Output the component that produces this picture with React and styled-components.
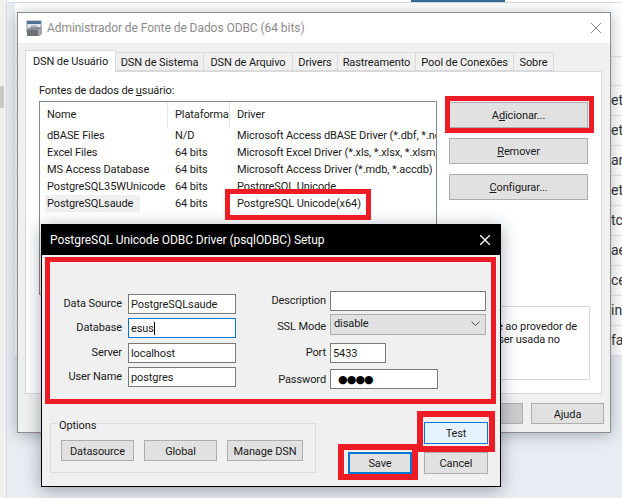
import React from "react";
import styled, { createGlobalStyle } from "styled-components";

const GlobalStyle = createGlobalStyle`
  html, body {
    margin: 0;
    padding: 0;
    background: #e9edf3;
  }
  * {
    box-sizing: border-box;
  }
`;

const Desktop = styled.div`
  position: relative;
  width: 622px;
  height: 498px;
  overflow: hidden;
  display: flex;
  background: #e9edf3;
  font-family: Roboto, "Liberation Sans", sans-serif;
  font-size: 11px;
  letter-spacing: -0.1px;
  color: #1a1a1a;
`;

const Sidebar = styled.div`
  width: 7px;
  height: 100%;
  flex: none;
  padding-top: 86px;
  background: #f1f1f1;
  border-right: 1px solid #d9dde6;
`;

const SidebarThumb = styled.div`
  width: 4px;
  height: 22px;
  background: #c9c9c9;
`;

const Main = styled.div`
  flex: 1;
  min-width: 0;
`;

const TopStrip = styled.div`
  height: 3px;
  padding-left: 404px;
  background: #fff;
  border-bottom: 1px solid #d9dde6;
`;

const ActiveTab = styled.div`
  width: 94px;
  height: 2px;
  background: #336b96;
`;

const Table = styled.div`
  margin-left: 8px;
  background: #fff;
`;

const TableHead = styled.div`
  height: ${(p) => p.$height}px;
  border-bottom: 1px solid #e3e3e3;
`;

const TableRow = styled.div`
  height: 30px;
  padding-left: 596px;
  line-height: 29px;
  font-size: 14px;
  letter-spacing: 0;
  white-space: nowrap;
  overflow: hidden;
  color: #333;
  border-bottom: 1px solid #e3e3e3;
`;

const AdminWindow = styled.div`
  position: absolute;
  left: 17px;
  top: 12px;
  width: 594px;
  height: 421px;
  display: flex;
  flex-direction: column;
  background: #f0f0f0;
  border: 1px solid #8e8e8e;
  box-shadow: 0 2px 14px rgba(40, 50, 70, 0.35);
`;

const AdminTitle = styled.div`
  height: 30px;
  flex: none;
  display: flex;
  align-items: center;
  justify-content: space-between;
  padding: 0 9px 0 8px;
  background: #fff;
  color: #8c8c8c;
  font-size: 12px;
  letter-spacing: -0.06px;
`;

const TitleLeft = styled.div`
  display: flex;
  align-items: center;
  gap: 4px;
`;

const TabStrip = styled.div`
  display: flex;
  align-items: flex-end;
  height: 28px;
  padding-left: 7px;
  flex: none;
`;

const Tab = styled.div`
  height: ${(p) => (p.$active ? "22px" : "19px")};
  width: ${(p) => p.$width}px;
  padding-top: ${(p) => (p.$active ? "0" : "1px")};
  display: flex;
  align-items: center;
  justify-content: center;
  background: ${(p) => (p.$active ? "#fff" : "#f0f0f0")};
  border: 1px solid #d9d9d9;
  border-bottom: ${(p) => (p.$active ? "none" : "1px solid #d9d9d9")};
  border-left: ${(p) => (p.$active ? "1px solid #d9d9d9" : "none")};
  margin-bottom: ${(p) => (p.$active ? "-1px" : "0")};
  position: relative;
`;

const Panel = styled.div`
  width: 577px;
  height: 323px;
  margin-left: 7px;
  padding: 11px 13px 0;
  flex: none;
  background: #fff;
  border: 1px solid #d9d9d9;
`;

const PanelLabel = styled.div`
  height: 18px;
  line-height: 16px;
`;

const PanelBody = styled.div`
  display: flex;
  gap: 12px;
`;

const ListColumn = styled.div`
  width: 398px;
  flex: none;
`;

const DsnList = styled.div`
  height: 194px;
  border: 1px solid #828790;
  overflow: hidden;
`;

const ListHeader = styled.div`
  display: grid;
  grid-template-columns: 128px 62px 1fr;
  height: 25px;
`;

const HeaderCell = styled.div`
  padding-left: 7px;
  line-height: 26px;
  border-right: 1px solid #e5e5e5;

  &:last-child {
    border-right: none;
  }
`;

const ListRow = styled.div`
  display: grid;
  grid-template-columns: 128px 62px 1fr;
  height: 17px;
  line-height: 17px;
  white-space: nowrap;
`;

const ListCell = styled.div`
  padding-left: 7px;
  overflow: hidden;
`;

const SelectedName = styled.span`
  display: inline-block;
  margin-left: -2px;
  padding: 0 7px 0 2px;
  background: #f0f0f0;
`;

const ButtonColumn = styled.div`
  width: 140px;
  padding-top: 1px;
  display: flex;
  flex-direction: column;
  gap: 10px;
`;

const WinButton = styled.div`
  display: flex;
  align-items: center;
  justify-content: center;
  width: ${(p) => (p.$width ? `${p.$width}px` : "auto")};
  height: ${(p) => p.$height || 21}px;
  padding-top: 1px;
  flex: none;
  background: ${(p) => (p.$hot ? "#e5f1fb" : p.$muted ? "#cccccc" : "#e1e1e1")};
  border: ${(p) => (p.$default ? "2px solid #0078d7" : p.$hot ? "1px solid #0078d7" : "1px solid #adadad")};
  white-space: nowrap;
`;

const Mnemonic = styled.span`
  text-decoration: underline;
`;

const InfoBox = styled.div`
  width: 542px;
  height: 74px;
  margin: 11px 0 0 9px;
  padding-top: 13px;
  border: 1px solid #d9d9d9;
  line-height: 13px;
`;

const InfoLine = styled.div`
  text-align: right;
  white-space: nowrap;
  padding-right: ${(p) => p.$inset}px;
`;

const AdminFooter = styled.div`
  display: flex;
  justify-content: flex-end;
  gap: 8px;
  padding: 9px 6px 0 0;
`;

const SetupDialog = styled.div`
  position: absolute;
  left: 41px;
  top: 224px;
  width: 460px;
  height: 263px;
  display: flex;
  flex-direction: column;
  background: #f0f0f0;
  border: 1px solid #000;
  box-shadow: 0 3px 16px rgba(30, 40, 60, 0.4);
`;

const SetupTitle = styled.div`
  height: 30px;
  flex: none;
  display: flex;
  align-items: center;
  justify-content: space-between;
  padding: 0 10px 0 8px;
  background: #000;
  color: #fff;
  font-size: 12px;
  letter-spacing: -0.06px;
`;

const FormArea = styled.div`
  display: flex;
  height: 134px;
  flex: none;
  padding-top: 36px;
`;

const FieldGrid = styled.div`
  display: grid;
  grid-template-columns: ${(p) => p.$labelWidth}px auto;
  grid-template-rows: ${(p) => p.$rows};
  column-gap: ${(p) => p.$gap}px;
  align-content: start;
  justify-content: start;
  margin-top: ${(p) => p.$top || 0}px;
  margin-left: ${(p) => p.$left || 0}px;
`;

const FieldLabel = styled.div`
  text-align: right;
  white-space: nowrap;
  line-height: ${(p) => p.$line || 20}px;
`;

const Field = styled.div`
  width: ${(p) => p.$width}px;
  height: 20px;
  padding-left: 2px;
  line-height: 19px;
  background: #fff;
  border: 1px solid ${(p) => (p.$focused ? "#0078d7" : "#7a7a7a")};
  white-space: nowrap;
`;

const Caret = styled.span`
  border-right: 1px solid #000;
`;

const Dots = styled.span`
  margin-left: 5px;
  font-family: "DejaVu Sans", sans-serif;
  font-size: 11px;
  letter-spacing: -0.9px;
  color: #000;
`;

const Select = styled.div`
  width: 156px;
  height: 21px;
  padding: 0 5px 2px 3px;
  display: flex;
  align-items: center;
  justify-content: space-between;
  background: #e1e1e1;
  border: 1px solid #adadad;
`;

const BottomRow = styled.div`
  display: flex;
  justify-content: space-between;
  padding: 33px 12px 0 8px;
`;

const OptionsGroup = styled.div`
  position: relative;
  width: 266px;
  height: 50px;
  margin-top: 1px;
  padding: 16px 0 0 10px;
  display: flex;
  gap: 10px;
  border: 1px solid #dcdcdc;
`;

const OptionsLegend = styled.span`
  position: absolute;
  left: 7px;
  top: -5px;
  padding: 0 1px;
  line-height: 14px;
  background: #f0f0f0;
`;

const ActionGrid = styled.div`
  display: grid;
  grid-template-columns: 64px 64px;
  grid-template-rows: 22px 22px;
  column-gap: 12px;
  row-gap: 8px;
`;

const TestSlot = styled.div`
  grid-column: 2;
`;

const Callout = styled.div`
  position: absolute;
  left: ${(p) => p.$x}px;
  top: ${(p) => p.$y}px;
  width: ${(p) => p.$w}px;
  height: ${(p) => p.$h}px;
  border: ${(p) => p.$t || 5}px solid #ed1c24;
  pointer-events: none;
`;

const OdbcIcon = () => (
  <svg width="17" height="17" viewBox="0 0 17 17">
    <rect x="1" y="1" width="14" height="11" fill="#e4e8ee" stroke="#8d9199" />
    <rect x="1" y="1" width="14" height="3" fill="#4d7396" />
    <path d="M1 9 L5 7 H16 V14 L13 16 H1 Z" fill="#8b8f94" />
    <path d="M1 10 H12 V16 H1 Z" fill="#6e7277" />
    <path d="M12 10 L16 7 V14 L12 16 Z" fill="#a3a6aa" />
    <rect x="5" y="5" width="6" height="2" fill="#b9bdc3" />
  </svg>
);

const CloseIcon = ({ size, color, weight }) => (
  <svg width={size} height={size} viewBox="0 0 10 10">
    <path d="M0 0 L10 10 M10 0 L0 10" stroke={color} strokeWidth={weight} fill="none" />
  </svg>
);

const Chevron = () => (
  <svg width="9" height="6" viewBox="0 0 9 6">
    <path d="M0.5 0.5 L4.5 4.5 L8.5 0.5" stroke="#555" fill="none" />
  </svg>
);

const tableTails = ["et", "et.", "ari", "et.", "tca", "aev", "ce", "ina", "fat"];

const tabs = [
  { label: "DSN de Usuário", width: 91, active: true },
  { label: "DSN de Sistema", width: 88 },
  { label: "DSN de Arquivo", width: 89 },
  { label: "Drivers", width: 45 },
  { label: "Rastreamento", width: 78 },
  { label: "Pool de Conexões", width: 98 },
  { label: "Sobre", width: 40 },
];

const sources = [
  ["dBASE Files", "N/D", "Microsoft Access dBASE Driver (*.dbf, *.ndx, *.mdx)"],
  ["Excel Files", "64 bits", "Microsoft Excel Driver (*.xls, *.xlsx, *.xlsm, *.xlsb)"],
  ["MS Access Database", "64 bits", "Microsoft Access Driver (*.mdb, *.accdb)"],
  ["PostgreSQL35WUnicode", "64 bits", "PostgreSQL Unicode"],
  ["PostgreSQLsaude", "64 bits", "PostgreSQL Unicode(x64)", true],
];

export default function App() {
  return (
    <>
      <GlobalStyle />
      <Desktop>
        <Sidebar>
          <SidebarThumb />
        </Sidebar>
        <Main>
          <TopStrip>
            <ActiveTab />
          </TopStrip>
          <Table>
            <TableHead $height={54} />
            <TableHead $height={29} />
            {tableTails.map((tail, i) => (
              <TableRow key={i}>{tail}</TableRow>
            ))}
          </Table>
        </Main>

        <AdminWindow>
          <AdminTitle>
            <TitleLeft>
              <OdbcIcon />
              Administrador de Fonte de Dados ODBC (64 bits)
            </TitleLeft>
            <CloseIcon size={10} color="#8c8c8c" weight={1} />
          </AdminTitle>
          <TabStrip>
            {tabs.map((t) => (
              <Tab key={t.label} $active={t.active} $width={t.width}>
                {t.label}
              </Tab>
            ))}
          </TabStrip>
          <Panel>
            <PanelLabel>
              Fontes de dados de <Mnemonic>u</Mnemonic>suário:
            </PanelLabel>
            <PanelBody>
              <ListColumn>
                <DsnList>
                  <ListHeader>
                    <HeaderCell>Nome</HeaderCell>
                    <HeaderCell>Plataforma</HeaderCell>
                    <HeaderCell>Driver</HeaderCell>
                  </ListHeader>
                  {sources.map(([name, platform, driver, selected]) => (
                    <ListRow key={name}>
                      <ListCell>
                        {selected ? <SelectedName>{name}</SelectedName> : name}
                      </ListCell>
                      <ListCell>{platform}</ListCell>
                      <ListCell>{driver}</ListCell>
                    </ListRow>
                  ))}
                </DsnList>
              </ListColumn>
              <ButtonColumn>
                <WinButton $height={26}>
                  A<Mnemonic>d</Mnemonic>icionar...
                </WinButton>
                <WinButton $height={26}>
                  <Mnemonic>R</Mnemonic>emover
                </WinButton>
                <WinButton $height={26}>
                  <Mnemonic>C</Mnemonic>onfigurar...
                </WinButton>
              </ButtonColumn>
            </PanelBody>
            <InfoBox>
              <InfoLine $inset={12}>como se conecte ao provedor de</InfoLine>
              <InfoLine $inset={29}>só pode ser usada no</InfoLine>
            </InfoBox>
          </Panel>
          <AdminFooter>
            <WinButton $width={73}>OK</WinButton>
            <WinButton $width={73}>Cancelar</WinButton>
            <WinButton $width={73} $muted />
            <WinButton $width={73}>Ajuda</WinButton>
          </AdminFooter>
        </AdminWindow>

        <SetupDialog>
          <SetupTitle>
            PostgreSQL Unicode ODBC Driver (psqlODBC) Setup
            <CloseIcon size={10} color="#fff" weight={1.3} />
          </SetupTitle>
          <FormArea>
            <FieldGrid
              $labelWidth={80}
              $gap={6}
              $top={3}
              $rows="24px 25px 24px 20px"
            >
              <FieldLabel>Data Source</FieldLabel>
              <Field $width={108}>PostgreSQLsaude</Field>
              <FieldLabel>Database</FieldLabel>
              <Field $width={108} $focused>
                <Caret>esus</Caret>
              </Field>
              <FieldLabel>Server</FieldLabel>
              <Field $width={108}>localhost</Field>
              <FieldLabel>User Name</FieldLabel>
              <Field $width={108}>postgres</Field>
            </FieldGrid>
            <FieldGrid
              $labelWidth={80}
              $gap={4}
              $left={10}
              $rows="23px 29px 26px 20px"
            >
              <FieldLabel>Description</FieldLabel>
              <Field $width={156} />
              <FieldLabel $line={26}>SSL Mode</FieldLabel>
              <Select>
                disable
                <Chevron />
              </Select>
              <FieldLabel>Port</FieldLabel>
              <Field $width={56}>5433</Field>
              <FieldLabel $line={22}>Password</FieldLabel>
              <Field $width={108}>
                <Dots>●●●●</Dots>
              </Field>
            </FieldGrid>
          </FormArea>
          <BottomRow>
            <OptionsGroup>
              <OptionsLegend>Options</OptionsLegend>
              <WinButton $width={73}>Datasource</WinButton>
              <WinButton $width={73}>Global</WinButton>
              <WinButton $width={76}>Manage DSN</WinButton>
            </OptionsGroup>
            <ActionGrid>
              <TestSlot>
                <WinButton $hot $height={22}>Test</WinButton>
              </TestSlot>
              <WinButton $default $height={22}>Save</WinButton>
              <WinButton $height={22}>Cancel</WinButton>
            </ActionGrid>
          </BottomRow>
        </SetupDialog>

        <Callout $x={445} $y={96} $w={149} $h={37} />
        <Callout $x={225} $y={189} $w={146} $h={31} />
        <Callout $x={45} $y={257} $w={451} $h={147} />
        <Callout $x={417} $y={411} $w={78} $h={41} $t={6} />
        <Callout $x={338} $y={444} $w={80} $h={36} $t={6} />
      </Desktop>
    </>
  );
}
